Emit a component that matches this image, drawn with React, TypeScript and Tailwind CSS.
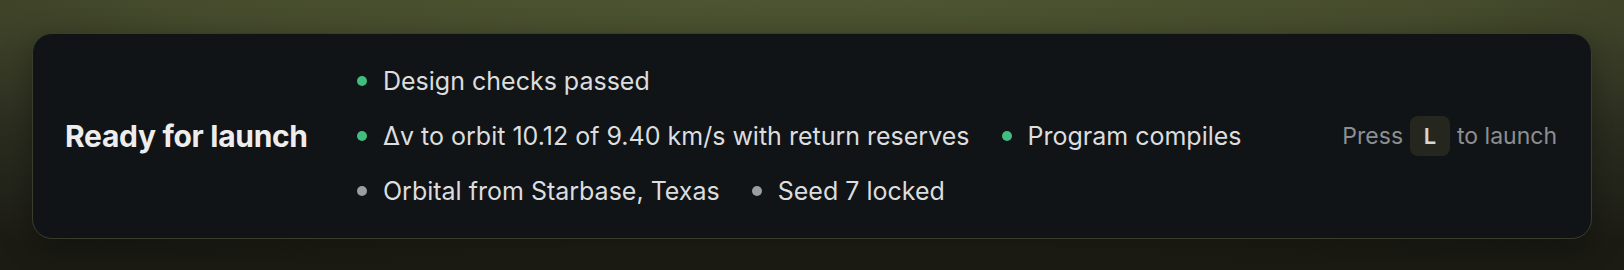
const checks: { label: string; ok: boolean }[][] = [
  [{ label: "Design checks passed", ok: true }],
  [
    { label: "Δv to orbit 10.12 of 9.40 km/s with return reserves", ok: true },
    { label: "Program compiles", ok: true },
  ],
  [
    { label: "Orbital from Starbase, Texas", ok: false },
    { label: "Seed 7 locked", ok: false },
  ],
];

const App = () => {
  return (
    <div className="w-[1624px] h-[270px] overflow-hidden bg-[radial-gradient(ellipse_120%_110%_at_50%_-10%,#505832_0%,#454b2c_35%,#2c2e20_65%,#1b1b14_100%)] pt-[33px] px-8 font-['Inter','Liberation_Sans',sans-serif]">
      <div className="h-[206px] rounded-[20px] border border-[#3a3d2b] bg-[#111416] shadow-[0_8px_30px_rgba(0,0,0,0.35)] flex items-center pl-8 pr-[34px]">
        <div className="w-[292px] shrink-0 text-[30px] font-bold text-[#ededee] tracking-[-0.01em]">
          Ready for launch
        </div>

        <div className="flex-1 flex flex-col gap-[23px]">
          {checks.map((row, i) => (
            <div key={i} className="flex items-center gap-8">
              {row.map((item) => (
                <div key={item.label} className="flex items-center gap-[16px]">
                  <span
                    className={
                      item.ok
                        ? "w-[10px] h-[10px] rounded-full bg-[#41bd7f]"
                        : "w-[10px] h-[10px] rounded-full bg-[#9b9da4]"
                    }
                  />
                  <span className="text-[25px] leading-8 text-[#dcdddf]">{item.label}</span>
                </div>
              ))}
            </div>
          ))}
        </div>

        <div className="flex items-center gap-[7px] text-[23px] text-[#8c8f92]">
          <span>Press</span>
          <span className="w-10 h-10 rounded-lg bg-[#25271f] flex items-center justify-center text-[22px] font-semibold text-[#d6d6d6]">
            L
          </span>
          <span>to launch</span>
        </div>
      </div>
    </div>
  );
};

export default App;
